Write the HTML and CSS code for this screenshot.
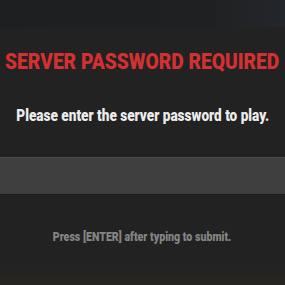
FILE: index.html
```html
<!DOCTYPE html>
<html>
<head>
<meta charset="utf-8">
<link rel="stylesheet" href="styles.css">
</head>
<body>
<div class="screen">
  <div class="topband"></div>
  <div class="content">
    <h1 class="title"><span class="squeeze wide">SERVER PASSWORD REQUIRED</span></h1>
    <p class="subtitle"><span class="squeeze">Please enter the server password to play.</span></p>
    <div class="field"></div>
    <p class="hint"><span class="squeeze">Press [ENTER] after typing to submit.</span></p>
  </div>
  <div class="floor"></div>
</div>
</body>
</html>
```

FILE: styles.css
```css
html, body {
  margin: 0;
  padding: 0;
  background: #212121;
}
.screen {
  width: 285px;
  height: 285px;
  display: flex;
  flex-direction: column;
  overflow: hidden;
  background: #222222;
  font-family: Roboto, "Liberation Sans", sans-serif;
  font-weight: 900;
}
.topband {
  height: 27px;
  flex: none;
  background: linear-gradient(90deg, #1e1f20 0%, #1f2021 70%, #23262b 100%);
}
.content {
  flex: 1;
  display: flex;
  flex-direction: column;
  align-items: center;
}
.squeeze {
  display: inline-block;
  transform: scaleX(0.85);
  transform-origin: center;
  white-space: nowrap;
}
.squeeze.wide {
  transform: scaleX(0.872);
}
.title {
  margin: 22px 0 0;
  font-size: 22px;
  line-height: 26px;
  color: #d33131;
  font-weight: 900;
}
.subtitle {
  margin: 32px 0 0;
  font-size: 16px;
  line-height: 18px;
  color: #ececec;
}
.field {
  align-self: stretch;
  margin-top: 32px;
  height: 36px;
  flex: none;
  background: #3f3f3f;
  border-top: 1px solid #4a4a4a;
  border-bottom: 1px solid #1b1b1b;
}
.hint {
  margin: 34px 0 0;
  font-size: 12.5px;
  line-height: 16px;
  color: #858585;
}
.floor {
  height: 18px;
  flex: none;
  background: linear-gradient(180deg, #232220 0%, #282520 100%);
}
```
